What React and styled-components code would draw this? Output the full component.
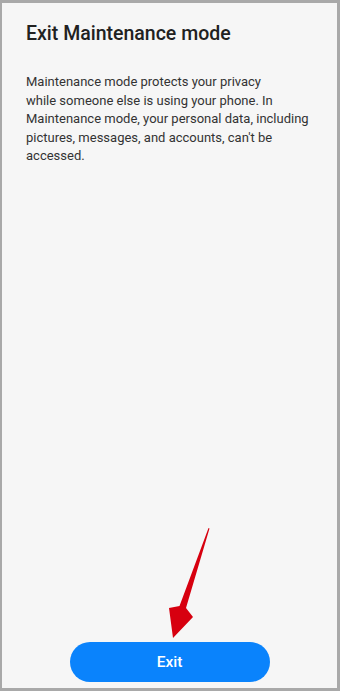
import React from "react";
import styled, { createGlobalStyle } from "styled-components";

const Global = createGlobalStyle`
  html, body { margin: 0; padding: 0; }
  body { font-family: Roboto, "Noto Sans", Arial, sans-serif; background: #a9a9a9; }
  * { box-sizing: border-box; }
`;

const Frame = styled.div`
  position: relative;
  width: 340px;
  height: 691px;
  border-style: solid;
  border-color: #a9a9a9;
  border-width: 3px 3px 3px 2px;
  background: #f6f6f6;
  display: flex;
  flex-direction: column;
`;

const Content = styled.div`
  padding: 19px 20px 0 24px;
  display: flex;
  flex-direction: column;
  gap: 27px;
`;

const Title = styled.h1`
  margin: 0;
  font-size: 19.5px;
  line-height: 24px;
  font-weight: 500;
  color: #212121;
  letter-spacing: 0;
`;

const Body = styled.p`
  margin: 0;
  font-size: 13px;
  line-height: 18.6px;
  color: #333333;
  font-weight: 400;
  white-space: nowrap;
`;

const Footer = styled.div`
  margin-top: auto;
  display: flex;
  justify-content: center;
  padding-bottom: 6px;
`;

const ExitButton = styled.button`
  width: 200px;
  height: 40px;
  border: none;
  border-radius: 20px;
  background: #0a83fc;
  color: #ffffff;
  font-family: Roboto, "Noto Sans", Arial, sans-serif;
  font-size: 15.5px;
  font-weight: 500;
  cursor: pointer;
`;

const Arrow = styled.svg`
  position: absolute;
  left: -2px;
  top: -3px;
  pointer-events: none;
`;

export default function App() {
  return (
    <>
      <Global />
      <Frame>
        <Content>
          <Title>Exit Maintenance mode</Title>
          <Body>
            Maintenance mode protects your privacy
            <br />
            while someone else is using your phone. In
            <br />
            Maintenance mode, your personal data, including
            <br />
            pictures, messages, and accounts, can't be
            <br />
            accessed.
          </Body>
        </Content>
        <Footer>
          <ExitButton>Exit</ExitButton>
        </Footer>
        <Arrow width="340" height="691" viewBox="0 0 340 691">
          <path
            d="M208.5 528 L209.5 528.5 L186 608 L193 617 L173 638 L169 608 L179.5 606 Z"
            fill="#d7000f"
          />
        </Arrow>
      </Frame>
    </>
  );
}
